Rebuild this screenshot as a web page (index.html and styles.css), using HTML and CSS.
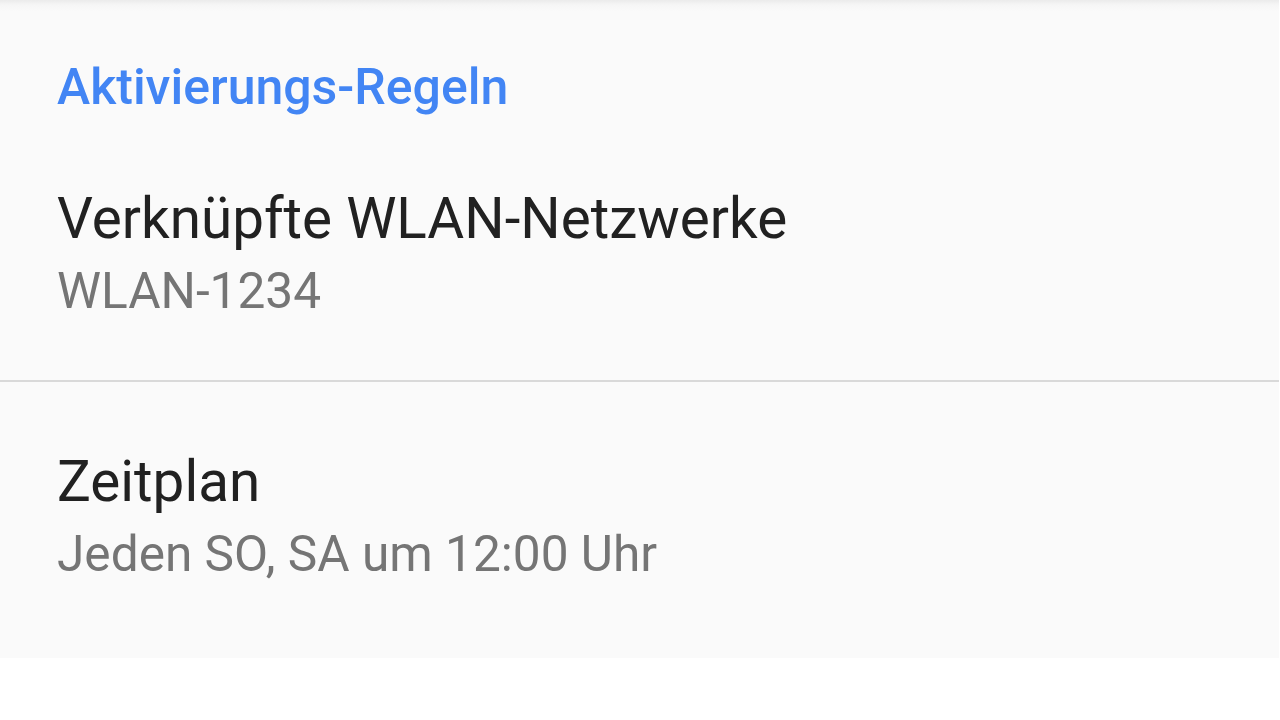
FILE: index.html
```html
<!DOCTYPE html>
<html lang="de">
<head>
<meta charset="utf-8">
<title>Aktivierungs-Regeln</title>
<link rel="stylesheet" href="styles.css">
</head>
<body>
<main class="panel">
  <h2 class="section-title">Aktivierungs-Regeln</h2>
  <div class="pref pref-first">
    <div class="pref-title">Verknüpfte WLAN-Netzwerke</div>
    <div class="pref-summary">WLAN-1234</div>
  </div>
  <div class="divider"></div>
  <div class="pref pref-last">
    <div class="pref-title">Zeitplan</div>
    <div class="pref-summary">Jeden SO, SA um 12:00 Uhr</div>
  </div>
</main>
</body>
</html>
```
FILE: styles.css
```css
html, body {
  margin: 0;
  padding: 0;
  background: #ffffff;
}
body {
  font-family: Roboto, "Noto Sans", "Liberation Sans", sans-serif;
  width: 1280px;
  height: 720px;
  overflow: hidden;
}
.panel {
  width: 1279px;
  background: linear-gradient(to bottom, #ebebeb 0px, #f6f6f6 5px, #fafafa 12px);
  display: flex;
  flex-direction: column;
}
.section-title {
  margin: 0;
  padding: 57px 0 2px 57px;
  font-size: 50px;
  line-height: 60px;
  font-weight: 500;
  color: #4285f4;
}
.pref {
  padding-left: 57px;
  display: flex;
  flex-direction: column;
}
.pref-first {
  padding-top: 68px;
  padding-bottom: 49px;
}
.pref-last {
  padding-top: 68px;
  padding-bottom: 64px;
}
.pref-title {
  font-size: 56.6px;
  line-height: 64px;
  color: #212121;
}
.pref-summary {
  font-size: 49.6px;
  line-height: 80px;
  color: #757575;
}
.divider {
  height: 2px;
  background: #d9d9d9;
}
```
